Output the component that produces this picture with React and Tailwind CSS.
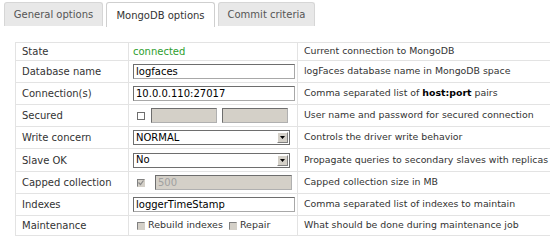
import React from "react";

const F = { fontFamily: "'DejaVu Sans', Verdana, sans-serif" };

function Input({ value, w = "w-[162px]" }) {
  return (
    <div className={`${w} h-[15px] bg-white border border-t-[#6e6e6e] border-l-[#6e6e6e] border-b-[#a8a8a8] border-r-[#a8a8a8] flex items-center pl-[2px] text-[10px] text-black leading-none`}>
      {value}
    </div>
  );
}

function Select({ value }) {
  return (
    <div className="w-[157px] h-[15px] bg-white border border-[#6e6e6e] flex items-center text-[10px] text-black leading-none">
      <div className="flex-1 pl-[2px]">{value}</div>
      <div className="w-[11px] h-[11px] mr-[1px] bg-[#d4d0c8] border border-t-white border-l-white border-b-[#808080] border-r-[#808080] flex items-center justify-center">
        <svg width="5" height="3" viewBox="0 0 5 3"><path d="M0 0h5L2.5 3z" fill="#000" /></svg>
      </div>
    </div>
  );
}

function Box({ checked, disabled }) {
  return (
    <span className={`inline-flex items-center justify-center w-[8px] h-[8px] border ${disabled ? "bg-[#d4d0c8] border-t-[#808080] border-l-[#808080] border-b-[#d4d0c8] border-r-[#d4d0c8]" : "bg-white border-[#6e6e6e]"}`}>
      {checked && (
        <svg width="6" height="6" viewBox="0 0 6 6"><path d="M0.5 2.5l2 2 3-4" stroke="#8a8a8a" strokeWidth="1.2" fill="none" /></svg>
      )}
    </span>
  );
}

const rows = [
  { label: "State", h: "h-[18px]", v: <span className="text-[#2e9e2e]">connected</span>, d: "Current connection to MongoDB" },
  { label: "Database name", h: "h-[22px]", v: <Input value="logfaces" />, d: "logFaces database name in MongoDB space" },
  { label: "Connection(s)", h: "h-[22px]", v: <Input value="10.0.0.110:27017" />, d: <>Comma separated list of <b className="text-black">host:port</b> pairs</> },
  {
    label: "Secured", h: "h-[22px]",
    v: (
      <div className="flex items-center">
        <span className="ml-[4px] mr-[6px] flex"><Box /></span>
        <div className="w-[66px] h-[15px] bg-[#d4d0c8] border border-t-[#6e6e6e] border-l-[#6e6e6e] border-b-[#b0b0b0] border-r-[#b0b0b0]" />
        <div className="w-[66px] h-[15px] ml-[5px] bg-[#d4d0c8] border border-t-[#6e6e6e] border-l-[#6e6e6e] border-b-[#b0b0b0] border-r-[#b0b0b0]" />
      </div>
    ),
    d: "User name and password for secured connection",
  },
  { label: "Write concern", h: "h-[22px]", v: <Select value="NORMAL" />, d: "Controls the driver write behavior" },
  { label: "Slave OK", h: "h-[23px]", v: <Select value="No" />, d: "Propagate queries to secondary slaves with replicas" },
  {
    label: "Capped collection", h: "h-[22px]",
    v: (
      <div className="flex items-center">
        <span className="ml-[4px] mr-[10px] flex"><Box checked disabled /></span>
        <div className="w-[137px] h-[15px] bg-[#d4d0c8] border border-t-[#6e6e6e] border-l-[#6e6e6e] border-b-[#b0b0b0] border-r-[#b0b0b0] flex items-center pl-[2px] text-[10px] text-[#a0a0a0] leading-none">500</div>
      </div>
    ),
    d: "Capped collection size in MB",
  },
  { label: "Indexes", h: "h-[22px]", v: <Input value="loggerTimeStamp" />, d: "Comma separated list of indexes to maintain" },
  {
    label: "Maintenance", h: "h-[20px]",
    v: (
      <div className="flex items-center text-[9.5px] text-[#333]">
        <span className="ml-[4px] mr-[3px] flex"><Box disabled /></span>
        <span>Rebuild indexes</span>
        <span className="ml-[6px] mr-[3px] flex"><Box disabled /></span>
        <span>Repair</span>
      </div>
    ),
    d: "What should be done during maintenance job",
  },
];

export default function App() {
  return (
    <div className="w-[550px] h-[240px] overflow-hidden bg-white text-[10px] text-[#333]" style={F}>
      <div className="flex gap-[3px] pl-[4px] pt-[2px] h-[27px] items-start">
        <div className="w-[99px] h-[24px] bg-[#e8e8e8] border border-b-0 border-[#d6d6d6] rounded-t-[3px] flex items-center justify-center text-[#555] text-[10px]">General options</div>
        <div className="w-[109px] h-[25px] bg-white border border-b-0 border-[#cfcfcf] rounded-t-[3px] flex items-center justify-center text-[#333] text-[10px]">MongoDB options</div>
        <div className="w-[97px] h-[24px] bg-[#e8e8e8] border border-b-0 border-[#d6d6d6] rounded-t-[3px] flex items-center justify-center text-[#555] text-[10px]">Commit criteria</div>
      </div>
      <div className="pl-[15px] pt-[15px]">
        <table className="border-collapse w-[620px] table-fixed">
          <colgroup>
            <col className="w-[113px]" />
            <col className="w-[169px]" />
            <col className="w-[338px]" />
          </colgroup>
          <tbody>
            {rows.map((r, i) => (
              <tr key={i} className={r.h}>
                <td className="border border-[#e3e3e3] pl-[6px] p-0 align-middle whitespace-nowrap">{r.label}</td>
                <td className="border border-[#e3e3e3] pl-[4px] p-0 align-middle whitespace-nowrap">{r.v}</td>
                <td className="border border-[#e3e3e3] pl-[6px] p-0 align-middle whitespace-nowrap text-[9.4px]">{r.d}</td>
              </tr>
            ))}
          </tbody>
        </table>
      </div>
    </div>
  );
}
